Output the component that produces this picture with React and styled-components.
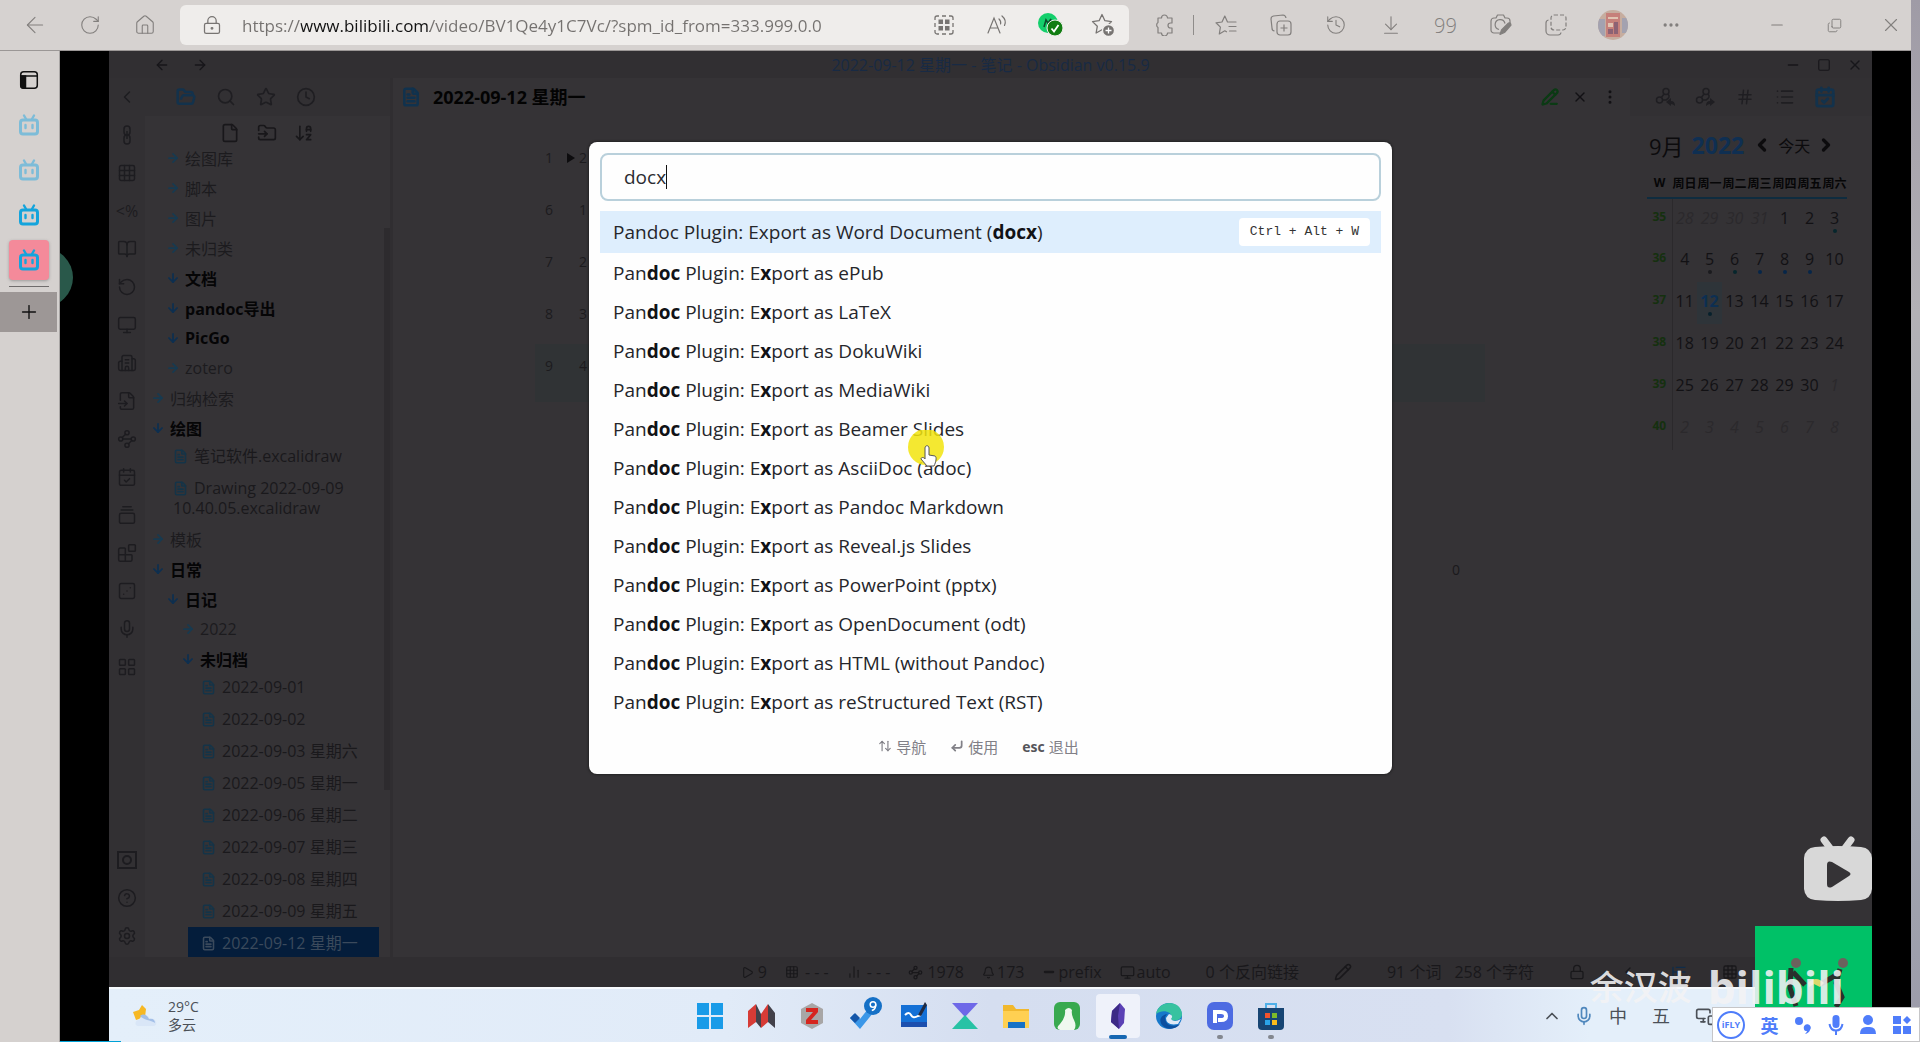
import React from "react";
import styled, { createGlobalStyle, css } from "styled-components";
import {
  ArrowLeft, ArrowRight, RotateCw, House, LockKeyhole, History, ArrowDownToLine, Ellipsis,
  Minus, Copy, X, Plus, Star, Search, Clock, FolderOpen, FileText, File, FolderInput, ArrowDownAZ,
  ChevronLeft, ChevronRight, ChevronUp, Grid3x3, BookOpen, RotateCcw, Monitor, FileInput, Waypoints, CalendarCheck,
  GalleryVerticalEnd, Blocks, Dice3, Mic, LayoutGrid, CircleHelp, Settings, Link, Hash, List, Square,
  PencilLine, EllipsisVertical, Pencil, CornerDownLeft, ArrowUpDown, Lock, Play, MonitorSmartphone,
  ChartNoAxesColumn, ListTree, Bell, Building2,
} from "lucide-react";

const sans = `"Open Sans", "Noto Sans", "Noto Sans CJK SC", sans-serif`;

const GlobalStyle = createGlobalStyle`
  * { box-sizing: border-box; }
  body { margin: 0; overflow: hidden; background: #a9a9b2; font-family: ${sans}; font-size: 16px; }
  button { font: inherit; color: inherit; border: 0; background: none; padding: 0; }
  ul { list-style: none; margin: 0; padding: 0; }
  svg { display: block; flex: none; }
`;

/* ---------- browser frame ---------- */

const Desktop = styled.div`
  height: 100vh;
  padding-right: 9px;
  background: linear-gradient(#9f9ba6, #b3b1b6 30%, #a5aeb6 60%, #9c9ba9);
  position: relative;
`;
const Browser = styled.div`
  height: 100%;
  display: flex;
  flex-direction: column;
  background: #d5d1cf;
`;
const Toolbar = styled.header`
  height: 51px;
  flex: none;
  display: flex;
  align-items: center;
  padding-left: 7px;
  border-bottom: 1px solid #9b9796;
  background: #d6d2d0;
  color: #827f7d;
`;
const ToolButton = styled.button`
  width: ${(p) => p.$w || 55}px;
  height: 40px;
  display: flex;
  align-items: center;
  justify-content: center;
`;
const Address = styled.form`
  flex: 1;
  height: 40px;
  margin: 0 8px;
  padding: 0 0 0 22px;
  display: flex;
  align-items: center;
  gap: 20px;
  border-radius: 6px;
  background: #efedeb;
  color: #777472;
`;
const AddressInput = styled.input`
  flex: 1;
  min-width: 0;
  border: 0;
  padding: 0;
  outline: 0;
  font: 17px ${sans};
  color: #74716f;
  -webkit-text-fill-color: transparent;
  background: linear-gradient(90deg, #74716f 59px, #111 59px, #111 188px, #74716f 188px);
  background-clip: text;
  -webkit-background-clip: text;
`;
const AddressTools = styled.div`
  display: flex;
`;
const Separator = styled.i`
  width: 1px;
  height: 20px;
  margin: 0 4px 0 1px;
  background: #8f8c8a;
`;
const Quotes = styled.span`
  font: 300 20px "Open Sans", sans-serif;
`;
const WindowControls = styled.div`
  display: flex;
  gap: 33px;
  padding: 0 8px 0 67px;
`;
const Body = styled.div`
  flex: 1;
  min-height: 0;
  display: flex;
`;
const Rail = styled.nav`
  width: 60px;
  flex: none;
  display: flex;
  flex-direction: column;
  align-items: center;
  padding: 9px 2px 0 0;
  border-right: 1px solid #a8a5a4;
`;
const RailTab = styled.button`
  width: 40px;
  height: 40px;
  margin-bottom: 5px;
  display: flex;
  align-items: center;
  justify-content: center;
  border-radius: 4px;
  color: ${(p) => (p.$faded ? "#7dbcd8" : "#14a4dc")};
  ${(p) => p.$active && css`
    background: #f48a9a;
    box-shadow: 0 1px 3px #7779;
  `}
`;
const RailRule = styled.hr`
  width: 40px;
  margin: 1px 0 5px;
  border: 0;
  border-top: 1px solid #6f6c6c;
`;
const NewTab = styled.button`
  align-self: stretch;
  height: 40px;
  display: flex;
  align-items: center;
  justify-content: center;
  background: #9d9796;
  color: #111;
`;
const Stage = styled.main`
  flex: 1;
  min-width: 0;
  padding: 0 39px 0 49px;
  background: #000;
  position: relative;
  overflow: hidden;
`;
const SideBlob = styled.div`
  position: absolute;
  left: -46px;
  top: 197px;
  width: 59px;
  height: 59px;
  border-radius: 50%;
  background: #29584a;
`;
const Progress = styled.div`
  position: absolute;
  left: 0;
  bottom: 0;
  width: 61px;
  height: 1px;
  background: #00a1d6;
`;
const Video = styled.div`
  height: 100%;
  display: flex;
  flex-direction: column;
  position: relative;
`;

/* ---------- note app ---------- */

const Notes = styled.section`
  flex: 1;
  min-height: 0;
  display: flex;
  flex-direction: column;
  background: #353336;
  color: #1c1b1e;
  position: relative;
`;
const TitleBar = styled.div`
  height: 27px;
  flex: none;
  display: grid;
  grid-template-columns: 1fr auto 1fr;
  align-items: center;
  background: #312f32;
  color: #17161a;
`;
const TitleText = styled.span`
  font-size: 16px;
  line-height: 24px;
  color: #182a44;
`;
const Cluster = styled.div`
  display: flex;
  align-items: center;
  gap: ${(p) => p.$gap}px;
  padding: 0 ${(p) => p.$right || 0}px 0 ${(p) => p.$left || 0}px;
  ${(p) => p.$end && "justify-content: flex-end;"}
`;
const Panes = styled.div`
  flex: 1;
  min-height: 0;
  display: flex;
`;
const Ribbon = styled.nav`
  width: 36px;
  flex: none;
  display: flex;
  flex-direction: column;
  align-items: center;
  background: #323033;
  color: #1d1c20;
  padding-bottom: 2px;
`;
const RibbonButton = styled.button`
  height: 38px;
  width: 32px;
  flex: none;
  display: flex;
  align-items: center;
  justify-content: center;
  margin-top: ${(p) => (p.$push ? "auto" : 0)};
`;
const Explorer = styled.aside`
  width: 248px;
  flex: none;
  display: flex;
  flex-direction: column;
  border-right: 3px solid #302e31;
`;
const PaneTabs = styled.div`
  height: 38px;
  flex: none;
  display: flex;
  align-items: center;
  padding-left: ${(p) => p.$pad}px;
  background: #323033;
`;
const PaneTab = styled.button`
  width: 40px;
  height: 38px;
  display: flex;
  align-items: center;
  justify-content: center;
  color: ${(p) => (p.$active ? "#13324c" : "#1f1e22")};
`;
const ExplorerTools = styled.div`
  height: 27px;
  flex: none;
  display: flex;
  align-items: flex-end;
  gap: 17px;
  padding-left: 75px;
  color: #18171a;
`;
const Scroller = styled.div`
  flex: 1;
  min-height: 0;
  overflow: hidden;
  position: relative;
  padding-right: 11px;
`;
const ScrollThumb = styled.div`
  position: absolute;
  right: 0;
  top: 85px;
  width: 6px;
  height: 562px;
  background: #2d2b2e;
`;
const Folder = styled.li`
  height: 30px;
  display: flex;
  align-items: center;
  gap: 5px;
  padding-left: ${(p) => 6 + p.$level * 15}px;
  font-weight: ${(p) => (p.$open ? 700 : 400)};
  color: ${(p) => (p.$open ? "#050506" : "#1c1b1e")};
  svg { color: ${(p) => (p.$open ? "#0d2f50" : "#173a50")}; }
`;
const Files = styled.ul`
  margin: -3px 0 0 ${(p) => p.$indent}px;
`;
const FileRow = styled.li`
  padding: 6px 0 6px 13px;
  line-height: 20px;
  color: ${(p) => (p.$active ? "#3b4a5c" : "#1a191c")};
  background: ${(p) => (p.$active ? "#041d3b" : "none")};
  svg {
    display: inline-block;
    vertical-align: -2px;
    margin-right: 6px;
    color: ${(p) => (p.$active ? "#3b4a5c" : "#143448")};
  }
`;
const Editor = styled.section`
  flex: 1;
  min-width: 0;
  display: flex;
  flex-direction: column;
`;
const EditorHead = styled.div`
  height: 38px;
  flex: none;
  display: flex;
  align-items: center;
  gap: 12px;
  padding: 0 5px 0 8px;
  svg.doc { color: #10324e; }
`;
const NoteTitle = styled.h1`
  margin: 0;
  flex: 1;
  font-size: 18px;
  line-height: 24px;
  color: #030303;
`;
const HeadButton = styled.button`
  width: 30px;
  display: flex;
  justify-content: center;
  color: ${(p) => p.$tone || "#121114"};
`;
const Lines = styled.ol`
  list-style: none;
  margin: 0;
  padding: 20px 145px 0 142px;
`;
const Line = styled.li`
  height: ${(p) => (p.$active ? 58 : 52)}px;
  padding: 10px 0 0 10px;
  display: flex;
  align-items: flex-start;
  line-height: 24px;
  font-size: 14px;
  background: ${(p) => (p.$active ? "#303335" : "none")};
`;
const Mark = styled.span`
  width: ${(p) => p.$w}px;
  height: 24px;
  display: flex;
  align-items: center;
`;
const Counter = styled.span`
  align-self: flex-end;
  margin: 158px 170px 0 0;
  font-size: 14px;
  line-height: 20px;
  color: #1a191c;
`;
const CalendarPane = styled.aside`
  width: 242px;
  flex: none;
  background: #343235;
`;
const CalendarHead = styled.div`
  display: flex;
  align-items: center;
  height: 46px;
  margin-top: 6px;
  padding-left: 19px;
  gap: 8px;
  font-size: 22px;
  color: #0c0b0d;
  strong { color: #0f2f52; font-size: 23px; }
  button { display: flex; align-items: center; gap: 6px; font-size: 16px; }
`;
const Calendar = styled.table`
  width: 200px;
  margin-left: 17px;
  border-collapse: collapse;
  table-layout: fixed;
  text-align: center;
`;
const DayName = styled.th`
  height: 30px;
  padding: 0;
  font-size: 12px;
  white-space: nowrap;
  color: #060607;
  border-bottom: 2px solid #0f2c3f;
`;
const Week = styled.th`
  height: 42px;
  padding: 8px 0 0;
  vertical-align: top;
  font-size: 12px;
  line-height: 20px;
  color: #15300f;
  border-right: 1px solid #2b292c;
`;
const Day = styled.td`
  padding: 8px 0 0;
  vertical-align: top;
  line-height: 22px;
  font-style: ${(p) => (p.$out ? "italic" : "normal")};
  font-weight: ${(p) => (p.$today ? 700 : 400)};
  color: ${(p) => (p.$out ? "#2b292c" : p.$today ? "#0d2f52" : "#121114")};
  background: ${(p) => (p.$today ? "#2e3439" : "none")};
`;
const Dot = styled.i`
  display: block;
  width: 4px;
  height: 4px;
  margin: 0 auto;
  border-radius: 50%;
  background: ${(p) => p.$c};
`;
const StatusBar = styled.footer`
  height: 30px;
  flex: none;
  display: flex;
  align-items: center;
  justify-content: flex-end;
  gap: 35px;
  padding-right: 134px;
  background: #302e31;
  color: #19181b;
  line-height: 24px;
  white-space: nowrap;
  font-variant-ligatures: none;
`;

/* ---------- command palette ---------- */

const Overlay = styled.div`
  position: absolute;
  inset: 0;
  display: flex;
  justify-content: center;
  align-items: flex-start;
  padding-top: 91px;
`;
const Palette = styled.div`
  width: 803px;
  height: 632px;
  padding: 11px;
  border-radius: 8px;
  background: #fefefe;
  box-shadow: 0 0 3px #111;
  color: #25262b;
  display: flex;
  flex-direction: column;
  position: relative;
`;
const Prompt = styled.label`
  height: 48px;
  flex: none;
  display: flex;
  align-items: center;
  padding: 0 22px;
  border: 2px solid #b9d0db;
  border-radius: 8px;
`;
const PromptInput = styled.input`
  field-sizing: content;
  border: 0;
  padding: 0;
  outline: 0;
  background: none;
  font: 19px ${sans};
  color: #2c2c31;
`;
const Caret = styled.i`
  width: 1px;
  height: 24px;
  background: #111;
`;
const Results = styled.ul`
  padding-top: 10px;
  font-size: 19px;
`;
const Result = styled.li`
  height: ${(p) => (p.$active ? 42 : 39)}px;
  padding: 0 11px 0 13px;
  display: flex;
  align-items: center;
  justify-content: space-between;
  background: ${(p) => (p.$active ? "#deeefd" : "none")};
  b { color: #111216; }
`;
const Kbd = styled.kbd`
  height: 28px;
  padding: 0 11px;
  border-radius: 4px;
  background: #fff;
  font: 13px/28px "Liberation Mono", monospace;
  color: #333;
`;
const Hints = styled.div`
  margin-top: auto;
  height: 34px;
  padding-right: 24px;
  display: flex;
  align-items: center;
  justify-content: center;
  gap: 24px;
  font-size: 15px;
  color: #818087;
  span { display: flex; align-items: center; gap: 4px; }
  b { font-size: 14px; color: #55545a; }
`;
const Pointer = styled.div`
  position: absolute;
  left: 318px;
  top: 288px;
  width: 40px;
  height: 40px;
`;

/* ---------- Windows taskbar ---------- */

const Taskbar = styled.footer`
  height: 55px;
  flex: none;
  display: grid;
  grid-template-columns: 1fr auto 1fr;
  align-items: center;
  border-top: 2px solid #f6fafd;
  background: linear-gradient(90deg, #e4effa, #e1ebf8 35%, #d5def0 50%, #d8e0f1 76%, #e4effa 84%, #e4effa);
  color: #4b5057;
`;
const Weather = styled.button`
  display: flex;
  align-items: center;
  gap: 10px;
  padding-left: 23px;
  text-align: left;
  font-size: 14px;
  line-height: 18px;
`;
const Apps = styled.div`
  display: flex;
  gap: 7px;
`;
const AppButton = styled.button`
  width: 44px;
  height: 44px;
  display: flex;
  align-items: center;
  justify-content: center;
  border-radius: 4px;
  position: relative;
  background: ${(p) => (p.$active ? "#eff2fa" : "none")};
  ${(p) => (p.$active || p.$running) && css`
    &::after {
      content: "";
      position: absolute;
      bottom: -1px;
      width: ${p.$active ? 18 : 6}px;
      height: 4px;
      border-radius: 2px;
      background: ${p.$active ? "#1667b2" : "#83878f"};
    }
  `}
`;
const Tray = styled.div`
  display: flex;
  justify-content: flex-end;
  gap: 15px;
  padding-right: 157px;
  font-size: 18px;
  line-height: 20px;
`;

/* ---------- things floating over the video ---------- */

const CamBox = styled.div`
  position: absolute;
  right: 0;
  bottom: 0;
  width: 117px;
  height: 116px;
  background: #00c167;
`;
const Uploader = styled.div`
  position: absolute;
  right: 28px;
  bottom: 37px;
  display: flex;
  align-items: center;
  gap: 16px;
  color: #f3f3f5e6;
  font-size: 34px;
  line-height: 36px;
  font-weight: 500;
  b { font-size: 44px; }
`;
const TvButton = styled.button`
  position: absolute;
  right: 0;
  bottom: 140px;
`;
const Ime = styled.div`
  position: absolute;
  right: 0;
  bottom: 0;
  width: 208px;
  height: 35px;
  padding: 0 8px 0 4px;
  display: flex;
  align-items: center;
  justify-content: space-between;
  border: 1px solid #c6c6c8;
  background: #fff;
  color: #4f7dfa;
  font-weight: 700;
  font-size: 18px;
`;
const IflyMark = styled.span`
  width: 28px;
  height: 28px;
  border: 2px solid #4f7dfa;
  border-radius: 50%;
  font: 700 9px/24px ${sans};
  text-align: center;
`;

/* ---------- drawings ---------- */

const BiliIcon = () => (
  <svg width="22" height="24" viewBox="0 0 22 24" fill="none" stroke="currentColor" strokeWidth="3" strokeLinecap="round">
    <rect x="2.5" y="7" width="17" height="14" rx="2.5" />
    <path d="M6 2.5 8 6M16 2.5 14 6M7.5 12v3M14.5 12v3" strokeWidth="2.4" />
  </svg>
);
const TabsIcon = () => (
  <svg width="20" height="20" viewBox="0 0 20 20" fill="none" stroke="#111" strokeWidth="1.5">
    <rect x="1.7" y="1.7" width="16.6" height="16.6" rx="3" />
    <path d="M2 6h16" />
    <path d="M2 6h4.5v12H4a2 2 0 0 1-2-2z" fill="#111" />
  </svg>
);
const QrIcon = () => (
  <svg width="20" height="20" viewBox="0 0 20 20" fill="none" stroke="currentColor" strokeWidth="1.3">
    <path d="M1 5V3a2 2 0 0 1 2-2h2M15 1h2a2 2 0 0 1 2 2v2M19 15v2a2 2 0 0 1-2 2h-2M5 19H3a2 2 0 0 1-2-2v-2M8 1h4M8 19h4M1 8v4M19 8v4" />
    <path d="M4.5 4.5h4.5v4.5H4.5zM11 4.5h4.5v4.5H11zM4.5 11h4.5v4.5H4.5zM11 11h4.5v4.5H11z" fill="currentColor" stroke="none" />
  </svg>
);
const ReadAloud = () => (
  <svg width="22" height="22" viewBox="0 0 22 22" fill="none" stroke="currentColor" strokeWidth="1.2" strokeLinecap="round">
    <path d="M2 19 8 4l6 15M4 14h8M13 5c1.6 1.4 2 3 1.6 5M16 2c3 2.5 4 6 2.5 9.5" />
  </svg>
);
const ShieldDot = () => (
  <svg width="28" height="26" viewBox="0 0 28 26">
    <circle cx="12" cy="11" r="10" fill="#14cf6c" />
    <path d="m8 15 2-7 2 3 3-4-2 6 1 5" stroke="#0b4f2c" strokeWidth="1.6" fill="none" />
    <circle cx="19" cy="16" r="8" fill="#127d12" stroke="#efedeb" />
    <path d="m15.5 16.5 2.5 3 4.5-6.5" stroke="#fff" strokeWidth="1.8" fill="none" />
  </svg>
);
const StarPlus = () => (
  <svg width="24" height="24" viewBox="0 0 24 24" fill="none" stroke="currentColor" strokeWidth="1.3" strokeLinejoin="round">
    <path d="m11 1.500 2.900 6.200 6.600.9-4.800 4.700 1.200 6.700-5.900-3.200L5.100 20l1.200-6.700L1.500 8.600l6.600-.9z" />
    <circle cx="17.500" cy="17.500" r="6" fill="currentColor" stroke="#efedeb" />
    <path d="M17.500 14.500v6M14.500 17.500h6" stroke="#fff" />
  </svg>
);
const StarList = () => (
  <svg width="22" height="22" viewBox="0 0 22 22" fill="none" stroke="currentColor" strokeWidth="1.200" strokeLinejoin="round" strokeLinecap="round">
    <path d="M12.500 8 9.800 2 7 8l-6 .800 4.400 4.300L4.300 20l5.500-3.200 1.700 1M13.500 8H21M14 12.500h7M14.500 17H21" />
  </svg>
);
const PuzzleIcon = () => (
  <svg width="20" height="22" viewBox="0 0 20 22" fill="none" stroke="currentColor" strokeWidth="1.200" strokeLinejoin="round">
    <path d="M3 4h3.500a3 3 0 0 1 6 0H17v5h-1.500a2.500 2.500 0 0 0 0 5H17v5h-4.500a3 3 0 0 1-6 0H3v-5.500a3 3 0 0 1 0-5z" />
  </svg>
);
const CollectIcon = () => (
  <svg width="22" height="22" viewBox="0 0 22 22" fill="none" stroke="currentColor" strokeWidth="1.200" strokeLinejoin="round">
    <rect x="7" y="7" width="14" height="14" rx="3" />
    <path d="M14 10.500v7M10.500 14h7M4.500 17A3 3 0 0 1 2 14L1 5a3 3 0 0 1 2.500-3L13 1q2.500 0 3 3" />
  </svg>
);
const CameraPen = () => (
  <svg width="22" height="22" viewBox="0 0 22 22" fill="none" stroke="currentColor" strokeWidth="1.200" strokeLinejoin="round">
    <path d="M10 19H4a3 3 0 0 1-3-3V7a3 3 0 0 1 3-3h2l1.500-3h6L15 4h2a3 3 0 0 1 3 3v2" />
    <path d="M9 15.500a5 5 0 1 1 6-6" />
    <path d="m10 20.500 1.500-4.500 7-7q2-1 2.500 2l-6.500 7.500z" fill="currentColor" />
  </svg>
);
const CaptureIcon = () => (
  <svg width="22" height="22" viewBox="0 0 22 22" fill="none" stroke="currentColor" strokeWidth="1.200">
    <rect x="6" y="1" width="15" height="15" rx="3" strokeDasharray="4 2" />
    <path d="M3.500 6A3 3 0 0 0 1 9v8a4 4 0 0 0 4 4h8a3 3 0 0 0 3-2.500" />
  </svg>
);
const SafeIcon = () => (
  <svg width="20" height="18" viewBox="0 0 20 18" fill="none" stroke="currentColor" strokeWidth="2">
    <rect x="1" y="1" width="18" height="16" /><circle cx="10" cy="9" r="4" />
  </svg>
);
const ChainIcon = () => (
  <svg width="20" height="20" viewBox="0 0 20 20" fill="none" stroke="currentColor" strokeWidth="1.500">
    <rect x="7" y="1" width="6" height="9" rx="3" /><rect x="7" y="10" width="6" height="9" rx="3" /><path d="M10 6v8" />
  </svg>
);
const BacklinkIcon = ({ flip }) => (
  <svg width="20" height="20" viewBox="0 0 20 20" fill="none" stroke="currentColor" strokeWidth="1.500">
    <circle cx="11" cy="4.500" r="3" /><circle cx="4.500" cy="13" r="3" /><path d="m9 7-3 4M13 7q3 3-2 6H7" />
    <path d={flip ? "M11 19q0-5 4-5v-3l5 4-5 4v-2q-2 0-4 2z" : "M20 19q0-5-4-5v-3l-5 4 5 4v-2q2 0 4 2z"} fill="currentColor" stroke="none" />
  </svg>
);
const Avatar = () => (
  <svg width="30" height="30" viewBox="0 0 30 30">
    <clipPath id="face"><circle cx="15" cy="15" r="15" /></clipPath>
    <g clipPath="url(#face)">
      <path fill="#c6ad9f" d="M0 0h30v30H0z" />
      <path fill="#a3a2b0" d="M0 9h7v17H0zM24 8h6v15h-6z" />
      <path fill="#c6807a" d="M8 3h14v24H8z" />
      <path fill="#e0c4b2" d="M10 7h10v2H10zM10 13h5v4h-5z" />
      <path fill="#8d6274" d="M16 12h4v12h-4zM10 19h5v5h-5z" />
    </g>
  </svg>
);
const Tri = () => <svg width="8" height="10" viewBox="0 0 8 10"><path d="M0 0l8 5-8 5z" fill="#0d0c0e" /></svg>;
const WeatherIcon = () => (
  <svg width="26" height="24" viewBox="0 0 26 24">
    <path d="m1 8 6-2 3-5 4 4-1 8-9 3z" fill="#f6b824" />
    <path d="M6 22c-4-1-3-6 1-6 2-6 9-6 11-1 5-2 9 5 4 7z" fill="#d9e6f7" />
    <path d="M8 12c4-3 7-1 9 3 4-1 6 1 6 4-4-3-12-3-15-7z" fill="#a3bfe8" />
  </svg>
);
const Hand = () => (
  <svg width="40" height="40" viewBox="0 0 40 40">
    <circle cx="19" cy="17" r="18" fill="#f2e40d" fillOpacity=".85" />
    <path d="M18 18c0-3 4-3 4 0v7l6 1c2 1 1 6-1 10h-7l-6-7c0-2 3-2 4 0z" fill="#fff" stroke="#555" />
  </svg>
);
const TvIcon = () => (
  <svg width="68" height="66" viewBox="0 0 68 66" fill="#d8d8d8">
    <path d="m20 4 6 8M47 4l-6 8" stroke="#d8d8d8" strokeWidth="7" strokeLinecap="round" />
    <path d="M11 11q23-2 46 0 10 1 11 11v31q-1 10-11 11-23 2-46 0Q1 63 0 53V22Q1 12 11 11z" />
    <path d="M23 29q0-5 5-3l17 10q3 2 0 4L28 51q-5 2-5-3z" fill="#353336" />
  </svg>
);
const People = () => (
  <svg width="117" height="82" viewBox="0 0 117 82">
    <g fill="#6b625d"><circle cx="41" cy="37" r="5" /><circle cx="88" cy="37" r="5" /></g>
    <path d="M36 42 35 62l6 18M38 46l12 13M85 43l-4 14 6 14-6 10M83 48 66 58" stroke="#29302d" strokeWidth="5" fill="none" />
    <path d="M53 57q8-8 16 0l-4 4-6-3-5 3z" fill="#d9d96b" />
  </svg>
);

const appArt = {
  开始: <path d="M1 1h12v12H1zM15 1h12v12H15zM1 15h12v12H1zM15 15h12v12H15z" fill="#199be8" />,
  笔记: <><path d="M1 9 9 2v18l-8 6zM14 12l7-10v18l-7 6z" fill="#d63b36" /><path d="m9 2 5 10v14L9 20zM21 2l7 9v15l-7-6z" fill="#43414a" /></>,
  Zotero: <><path d="m14 1 11 6v14l-11 6-11-6V7z" fill="#a8a6a6" /><path d="M8 6h12v4l-7 8h7v4H8v-4l7-8H8z" fill="#d6251e" /></>,
  待办: <><path d="m1 16 4-4 6 5L19 7l5 4-13 16z" fill="#3b97e8" /><path d="m1 16 5-5 5 5-5 5z" fill="#1556a8" /><circle cx="24" cy="4" r="9" fill="#1570c6" /><circle cx="24" cy="2.5" r="2.8" fill="none" stroke="#fff" strokeWidth="1.5" /><path d="M26.800 2.500q0 5-4 6" fill="none" stroke="#fff" strokeWidth="1.500" /></>,
  白板: <><path d="M1 3h26v18H1z" fill="#1470d6" /><path d="M1 20h26v5H1z" fill="#1c4fae" /><path d="M5 13q4-4 6 0t7 1l3-1" stroke="#fff" strokeWidth="2" fill="none" /><path d="m18 13 7-13 2 3-6 11z" fill="#222b42" /></>,
  沙漏: <><path d="M1 1h26L14 15z" fill="#6e68e8" /><path d="M1 27h26L14 13z" fill="#27c2a5" /></>,
  文件: <><path d="M1 3h10l3 4h13v19H1z" fill="#f1b82d" /><path d="M1 9h26v17H1z" fill="#ffd052" /><path d="M6 20h17v6H6z" fill="#1671c6" /></>,
  影音: <><rect x="1" y="0" width="26" height="28" rx="6" fill="#38a94f" /><path d="M12 8q4-4 7 0-1 4 2 10t0 10H7q-5-2 0-6 6-7 5-14z" fill="#eff8ef" /></>,
  Obsidian: <><path d="m16 1 5 6-1 14-5 6-8-7 1-11z" fill="#5b41b5" /><path d="m16 1-2 13 1 13-8-7 1-11z" fill="#3c2a86" /></>,
  Edge: <><circle cx="14" cy="14" r="13" fill="#1678ca" /><path d="M1 12C4-3 26-2 27 12c0 7-9 8-11 5 3-6-7-11-15-5z" fill="#38c2a0" /><path d="M10 15c0 8 7 11 15 7-4 6-14 6-18 1-4-6 0-10 5-11z" fill="#0c4f9f" /><path d="M14 12q5 1 2 5 3 4 10 0l-3 5q-12 2-12-6z" fill="#dfe9f6" /></>,
  词典: <><rect x="1" y="0" width="26" height="28" rx="7" fill="#4d6be2" /><path d="M7 8h8q7 0 7 6t-7 6h-3v-4h3q3 0 3-2t-3-2h-4v9H7z" fill="#fff" /></>,
  商店: <><path d="M9 6V2h10v4" stroke="#4fb0e8" strokeWidth="2" fill="none" /><path d="M1 6h26v18q0 4-4 4H5q-4 0-4-4z" fill="#174573" /><path d="M8 11h5v5H8z" fill="#f0532d" /><path d="M15 11h5v5h-5z" fill="#7dbb2a" /><path d="M8 18h5v5H8z" fill="#2ba4e8" /><path d="M15 18h5v5h-5z" fill="#fbbc1c" /></>,
};

/* ---------- data ---------- */

const ribbonTop = [ChevronLeft, ChainIcon, Grid3x3, "<%", BookOpen, RotateCcw, Monitor, Building2, FileInput, Waypoints, CalendarCheck, GalleryVerticalEnd, Blocks, Dice3, Mic, LayoutGrid];
const ribbonBottom = [SafeIcon, CircleHelp, Settings];

const folders1 = [
  ["绘图库", 1], ["脚本", 1], ["图片", 1], ["未归类", 1], ["文档", 1, true], ["pandoc导出", 1, true],
  ["PicGo", 1, true], ["zotero", 1], ["归纳检索", 0], ["绘图", 0, true],
];
const folders2 = [["模板", 0], ["日常", 0, true], ["日记", 1, true], ["2022", 2], ["未归档", 2, true]];
const drawings = ["笔记软件.excalidraw", "Drawing 2022-09-09 10.40.05.excalidraw"];
const diary = ["2022-09-01", "2022-09-02", "2022-09-03 星期六", "2022-09-05 星期一", "2022-09-06 星期二",
  "2022-09-07 星期三", "2022-09-08 星期四", "2022-09-09 星期五", "2022-09-12 星期一"];

const dayNames = ["W", "周日", "周一", "周二", "周三", "周四", "周五", "周六"];
const weeks = [35, 36, 37, 38, 39, 40];
const dots = { 3: "#06262c", 5: "#1a1b1e", 6: "#06262c", 7: "#062648", 8: "#062648", 9: "#062648", 12: "#06202c" };

const formats = ["ePub", "LaTeX", "DokuWiki", "MediaWiki", "Beamer Slides", "AsciiDoc (adoc)", "Pandoc Markdown",
  "Reveal.js Slides", "PowerPoint (pptx)", "OpenDocument (odt)", "HTML (without Pandoc)", "reStructured Text (RST)"];

const FolderRows = ({ items }) => items.map(([name, level, open]) => (
  <Folder key={name} $level={level} $open={open}>
    {open ? <ArrowRight size={14} strokeWidth={3} transform="rotate(90)" /> : <ArrowRight size={14} strokeWidth={3} />}
    {name}
  </Folder>
));
const FileRows = ({ items, indent, active }) => (
  <Files $indent={indent}>
    {items.map((n) => <FileRow key={n} $active={n === active}><FileText size={15} strokeWidth={2.5} />{n}</FileRow>)}
  </Files>
);

function BrowserToolbar() {
  const ico = { size: 22, strokeWidth: 1.2 };
  return (
    <Toolbar>
      <ToolButton aria-label="后退"><ArrowLeft size={26} strokeWidth={1} /></ToolButton>
      <ToolButton aria-label="刷新"><RotateCw {...ico} /></ToolButton>
      <ToolButton aria-label="主页"><House {...ico} /></ToolButton>
      <Address>
        <LockKeyhole size={20} strokeWidth={1.5} />
        <AddressInput aria-label="地址" readOnly value="https://www.bilibili.com/video/BV1Qe4y1C7Vc/?spm_id_from=333.999.0.0" />
        <AddressTools>
          <ToolButton type="button" $w={53} aria-label="二维码"><QrIcon /></ToolButton>
          <ToolButton type="button" $w={53} aria-label="朗读"><ReadAloud /></ToolButton>
          <ToolButton type="button" $w={53} aria-label="防护"><ShieldDot /></ToolButton>
          <ToolButton type="button" $w={53} aria-label="收藏"><StarPlus /></ToolButton>
        </AddressTools>
      </Address>
      <ToolButton aria-label="扩展"><PuzzleIcon /></ToolButton>
      <Separator />
      <ToolButton aria-label="收藏夹"><StarList /></ToolButton>
      <ToolButton aria-label="集锦"><CollectIcon /></ToolButton>
      <ToolButton aria-label="历史"><History {...ico} /></ToolButton>
      <ToolButton aria-label="下载"><ArrowDownToLine {...ico} /></ToolButton>
      <ToolButton aria-label="引用"><Quotes>99</Quotes></ToolButton>
      <ToolButton aria-label="截图"><CameraPen /></ToolButton>
      <ToolButton aria-label="网页捕获"><CaptureIcon /></ToolButton>
      <ToolButton aria-label="个人资料" $w={60}><Avatar /></ToolButton>
      <ToolButton aria-label="更多"><Ellipsis size={20} strokeWidth={2} /></ToolButton>
      <WindowControls>
        <ToolButton $w={24} aria-label="最小化"><Minus size={18} strokeWidth={1.5} /></ToolButton>
        <ToolButton $w={24} aria-label="还原"><Copy size={15} strokeWidth={1.5} transform="rotate(-90)" /></ToolButton>
        <ToolButton $w={24} aria-label="关闭"><X size={22} strokeWidth={1.2} /></ToolButton>
      </WindowControls>
    </Toolbar>
  );
}

function CalendarView() {
  return (
    <CalendarPane>
      <PaneTabs $pad={15}>
        <PaneTab aria-label="反向链接"><BacklinkIcon /></PaneTab>
        <PaneTab aria-label="出链"><BacklinkIcon flip /></PaneTab>
        <PaneTab aria-label="标签"><Hash size={18} /></PaneTab>
        <PaneTab aria-label="大纲"><List size={20} /></PaneTab>
        <PaneTab $active aria-label="日历"><CalendarCheck size={22} strokeWidth={3} /></PaneTab>
      </PaneTabs>
      <CalendarHead>
        <span>9月</span>
        <strong>2022</strong>
        <button type="button"><ChevronLeft size={20} strokeWidth={4} />今天<ChevronRight size={20} strokeWidth={4} /></button>
      </CalendarHead>
      <Calendar>
        <thead><tr>{dayNames.map((d) => <DayName key={d}>{d}</DayName>)}</tr></thead>
        <tbody>
          {weeks.map((w, r) => (
            <tr key={w}>
              <Week>{w}</Week>
              {[0, 1, 2, 3, 4, 5, 6].map((c) => {
                const n = r * 7 + c - 3;
                const out = n < 1 || n > 30;
                const label = n < 1 ? n + 31 : n > 30 ? n - 30 : n;
                return (
                  <Day key={c} $out={out} $today={n === 12}>
                    {label}
                    {!out && dots[n] && <Dot $c={dots[n]} />}
                  </Day>
                );
              })}
            </tr>
          ))}
        </tbody>
      </Calendar>
    </CalendarPane>
  );
}

function CommandPalette() {
  return (
    <Overlay>
      <Palette role="dialog" aria-label="命令面板">
        <Prompt><PromptInput aria-label="命令" defaultValue="docx" /><Caret /></Prompt>
        <Results>
          <Result $active><span>Pandoc Plugin: Export as Word Document (<b>docx</b>)</span><Kbd>Ctrl + Alt + W</Kbd></Result>
          {formats.map((f) => (
            <Result key={f}><span>Pan<b>doc</b> Plugin: E<b>x</b>port as {f}</span></Result>
          ))}
        </Results>
        <Hints>
          <span><ArrowUpDown size={14} />导航</span>
          <span><CornerDownLeft size={14} strokeWidth={3} />使用</span>
          <span><b>esc</b>退出</span>
        </Hints>
        <Pointer><Hand /></Pointer>
      </Palette>
    </Overlay>
  );
}

export default function App() {
  return (
    <Desktop>
      <GlobalStyle />
      <Browser>
        <BrowserToolbar />
        <Body>
          <Rail>
            <RailTab aria-label="标签页"><TabsIcon /></RailTab>
            <RailTab $faded aria-label="bilibili 1"><BiliIcon /></RailTab>
            <RailTab $faded aria-label="bilibili 2"><BiliIcon /></RailTab>
            <RailTab aria-label="bilibili 3"><BiliIcon /></RailTab>
            <RailTab $active aria-label="bilibili 4"><BiliIcon /></RailTab>
            <RailRule />
            <NewTab aria-label="新建标签页"><Plus size={22} strokeWidth={1.5} /></NewTab>
          </Rail>
          <Stage>
            <SideBlob />
            <Video>
              <Notes>
                <TitleBar>
                  <Cluster $gap={22} $left={45}><ArrowLeft size={16} /><ArrowRight size={16} /></Cluster>
                  <TitleText>2022-09-12 星期一 - 笔记 - Obsidian v0.15.9</TitleText>
                  <Cluster $gap={16} $right={9} $end><Minus size={16} /><Square size={14} /><X size={16} /></Cluster>
                </TitleBar>
                <Panes>
                  <Ribbon>
                    {ribbonTop.map((I, i) => (
                      <RibbonButton key={i} aria-label={`命令 ${i + 1}`}>{I === "<%" ? "<%" : <I size={20} strokeWidth={1.8} />}</RibbonButton>
                    ))}
                    {ribbonBottom.map((I, i) => (
                      <RibbonButton key={i} $push={i === 0} aria-label={`工具 ${i + 1}`}><I size={20} strokeWidth={1.8} /></RibbonButton>
                    ))}
                  </Ribbon>
                  <Explorer>
                    <PaneTabs $pad={21}>
                      {[FolderOpen, Search, Star, Clock].map((I, i) => (
                        <PaneTab key={i} $active={i === 0} aria-label={`面板 ${i + 1}`}><I size={20} strokeWidth={i === 0 ? 3 : 2} /></PaneTab>
                      ))}
                    </PaneTabs>
                    <ExplorerTools><File size={20} /><FolderInput size={20} /><ArrowDownAZ size={20} /></ExplorerTools>
                    <Scroller>
                      <ul><FolderRows items={folders1} /></ul>
                      <FileRows items={drawings} indent={15} />
                      <ul><FolderRows items={folders2} /></ul>
                      <FileRows items={diary} indent={43} active="2022-09-12 星期一" />
                      <ScrollThumb />
                    </Scroller>
                  </Explorer>
                  <Editor>
                    <EditorHead>
                      <FileText className="doc" size={20} strokeWidth={3} />
                      <NoteTitle>2022-09-12 星期一</NoteTitle>
                      <Cluster $gap={0}>
                        <HeadButton $tone="#0b3a14" aria-label="编辑"><PencilLine size={18} strokeWidth={3} /></HeadButton>
                        <HeadButton aria-label="关闭笔记"><X size={16} /></HeadButton>
                        <HeadButton aria-label="更多选项"><EllipsisVertical size={18} /></HeadButton>
                      </Cluster>
                    </EditorHead>
                    <Lines>
                      {[[1, "2"], [6, "1"], [7, "2"], [8, "3"], [9, "4"]].map(([n, t]) => (
                        <Line key={n} $active={n === 9}>
                          <Mark $w={22}>{n}</Mark><Mark $w={12}>{n === 1 && <Tri />}</Mark>{t}
                        </Line>
                      ))}
                    </Lines>
                    <Counter>0</Counter>
                  </Editor>
                  <CalendarView />
                </Panes>
                <StatusBar>
                  <Cluster $gap={18}>
                    <Cluster $gap={4}><Play size={13} />9</Cluster>
                    <Cluster $gap={6}><Grid3x3 size={14} />- - -</Cluster>
                    <Cluster $gap={6}><ChartNoAxesColumn size={14} />- - -</Cluster>
                    <Cluster $gap={4}><Waypoints size={15} />1978</Cluster>
                    <Cluster $gap={2}><Bell size={13} />173</Cluster>
                    <Cluster $gap={2}><Minus size={14} strokeWidth={4} />prefix</Cluster>
                    <Cluster $gap={2}><Monitor size={15} />auto</Cluster>
                  </Cluster>
                  <span>0 个反向链接</span>
                  <Pencil size={18} />
                  <Cluster $gap={13}><span>91 个词</span><span>258 个字符</span></Cluster>
                  <Lock size={16} />
                  <ChevronLeft size={16} />
                  <ListTree size={16} color="#0f2c4a" />
                  <Grid3x3 size={16} />
                </StatusBar>
                <CommandPalette />
              </Notes>
              <Taskbar>
                <Weather><WeatherIcon /><span>29°C<br />多云</span></Weather>
                <Apps>
                  {Object.entries(appArt).map(([name, art]) => (
                    <AppButton key={name} aria-label={name} $active={name === "Obsidian"} $running={name === "词典" || name === "商店"}>
                      <svg width="28" height="28" viewBox="0 0 28 28" overflow="visible">{art}</svg>
                    </AppButton>
                  ))}
                </Apps>
                <Tray>
                  <Cluster $gap={12}><ChevronUp size={20} /><Mic size={20} color="#5088bd" /></Cluster>
                  <Cluster $gap={25}><span>中</span><span>五</span><MonitorSmartphone size={20} /></Cluster>
                </Tray>
              </Taskbar>
              <CamBox><People /></CamBox>
              <Uploader><span>余汉波</span><b>bilibili</b></Uploader>
              <TvButton aria-label="播放"><TvIcon /></TvButton>
            </Video>
            <Progress />
          </Stage>
        </Body>
      </Browser>
      <Ime>
        <IflyMark>iFLY</IflyMark>
        <span>英</span>
        <svg width="18" height="18" viewBox="0 0 18 18" fill="currentColor"><circle cx="5" cy="5" r="4" /><path d="M10 13a3.5 3.5 0 1 1 6 1q-1 3-5 4 2-2 2-3-3 0-3-2z" /></svg>
        <svg width="16" height="20" viewBox="0 0 16 20" fill="currentColor"><rect x="4.5" width="7" height="13" rx="3.5" /><path d="M1.500 9q1 6.500 6.500 6.500T14.500 9M8 15v5" fill="none" stroke="currentColor" strokeWidth="2" /></svg>
        <svg width="18" height="20" viewBox="0 0 18 20" fill="currentColor"><circle cx="9" cy="5" r="5" /><path d="M1 19q0-8 8-7 8-1 8 7z" /></svg>
        <svg width="18" height="18" viewBox="0 0 18 18" fill="currentColor"><path d="M0 0h8v8H0zM0 10h8v8H0zM10 10h8v8h-8zM14 0l4 4-4 4-4-4z" /></svg>
      </Ime>
    </Desktop>
  );
}
